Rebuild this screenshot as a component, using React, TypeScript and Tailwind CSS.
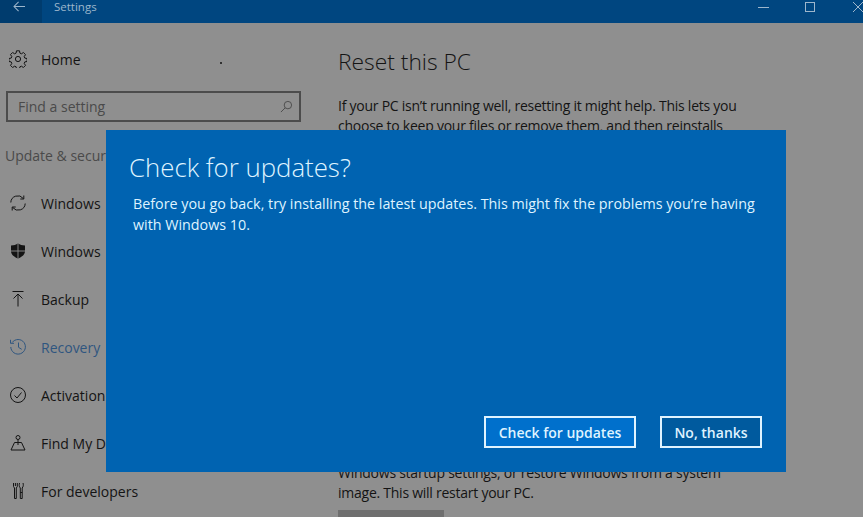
import type { ReactNode } from "react";

const ink = "#141414";

function Svg({ children, className = "" }: { children: ReactNode; className?: string }) {
  return (
    <svg viewBox="0 0 18 18" fill="none" stroke="currentColor" strokeWidth={1} className={`w-[18px] h-[18px] shrink-0 ${className}`}>
      {children}
    </svg>
  );
}

const GearIcon = () => (
  <Svg>
    <circle cx="9" cy="9" r="2.600" />
    <path d="M7.500.8h3l.4 2.300 1.500.7 2-1.300 2.100 2.100-1.300 2 .6 1.500 2.300.4v3l-2.300.4-.6 1.500 1.300 2-2.100 2.100-2-1.300-1.500.6-.4 2.300h-3l-.4-2.300-1.500-.6-2 1.300-2.100-2.100 1.300-2-.6-1.500-2.300-.4v-3l2.300-.4.6-1.500-1.300-2 2.100-2.100 2 1.300 1.500-.7z" />
  </Svg>
);

const SyncIcon = () => (
  <Svg>
    <path d="M1.800 8.500A7 7 0 0 1 14.300 4.500" />
    <path d="M14.800 1.500v3.500h-3.500" />
    <path d="M16.200 9.500A7 7 0 0 1 3.700 13.500" />
    <path d="M3.200 16.500V13h3.500" />
  </Svg>
);

const ShieldIcon = () => (
  <svg viewBox="0 0 18 18" className="w-[18px] h-[18px] shrink-0" fill="currentColor">
    <path d="M9 1.500c2 1.300 4 1.800 7 2V9c0 3.500-3 6-7 7.500C5 15 2 12.500 2 9V3.500c3-.2 5-.7 7-2z" />
    <path d="M9 1.500v15M2 9h14" stroke="#8f8f8f" strokeWidth="0.9" />
  </svg>
);

const BackupIcon = () => (
  <Svg>
    <path d="M3.500 1.500h11" />
    <path d="M9 16.500V4" />
    <path d="M4.500 8.500 9 4l4.500 4.500" />
  </Svg>
);

const HistoryIcon = () => (
  <Svg>
    <path d="M3.200 4.500A7.300 7.300 0 1 1 1.800 9" />
    <path d="M1.500 1.800v3.500H5" />
    <path d="M9.500 4.500v4.800l3.200 2" />
  </Svg>
);

const CheckIcon = () => (
  <Svg>
    <circle cx="9" cy="9" r="7.500" />
    <path d="M5.500 9.500l2.500 2.500 4.500-5.500" />
  </Svg>
);

const FindIcon = () => (
  <Svg>
    <circle cx="9" cy="3.500" r="2" />
    <path d="M9 5.500v5.500" />
    <path d="M5.500 8.500h7" />
    <path d="M5.500 8.500 2 16h14l-3.500-7.500" />
  </Svg>
);

const DevIcon = () => (
  <Svg>
    <path d="M4.500 1v3.500l1 1.500v10.500h1.800V6l1-1.500V1" />
    <path d="M6.400 1v3" />
    <path d="M10.500 1c-.5 1.500-.5 3.500.8 5v10.500h1.900V6c1.300-1.500 1.300-3.500.8-5" />
    <path d="M11.300 10.500h1.900" />
  </Svg>
);

// labels stop where the dialog covers them
const navItems: { label: string; icon: ReactNode; active?: boolean }[] = [
  { label: "Windows", icon: <SyncIcon /> },
  { label: "Windows", icon: <ShieldIcon /> },
  { label: "Backup", icon: <BackupIcon /> },
  { label: "Recovery", icon: <HistoryIcon />, active: true },
  { label: "Activation", icon: <CheckIcon /> },
  { label: "Find My D", icon: <FindIcon /> },
  { label: "For developers", icon: <DevIcon /> },
];

export default function App() {
  return (
    <div
      className="relative w-[863px] h-[517px] overflow-hidden bg-[#8f8f8f] text-[14px]"
      style={{ fontFamily: '"Open Sans", "Noto Sans", sans-serif', color: ink }}
    >
      {/* title bar */}
      <div className="flex items-start h-[23px] bg-[#004680] text-[#9db6cc]">
        <div className="flex items-center justify-center w-[42px] h-full pb-[10px] pr-1 bg-[#003c6e]">
          <svg viewBox="0 0 14 12" className="w-[13px] h-[11px]" fill="none" stroke="currentColor" strokeWidth="1.1">
            <path d="M13 6H1.500M6 1 1 6l5 5" />
          </svg>
        </div>
        <span className="ml-[12px] text-[11.500px] leading-[14px]">Settings</span>
        <div className="flex items-center ml-auto h-[14px]">
          <div className="w-[11px] h-px bg-current mr-[36px]" />
          <div className="w-[10px] h-[10px] border border-current mr-[37px]" />
          <svg viewBox="0 0 12 12" className="w-[12px] h-[12px] mr-[-1px]" fill="none" stroke="currentColor" strokeWidth="1">
            <path d="M1 1l10 10M11 1 1 11" />
          </svg>
        </div>
      </div>

      <div className="flex">
        {/* sidebar */}
        <aside className="w-[320px] shrink-0">
          <div className="flex items-center h-[48px] mt-[12px] pl-[9px] gap-[14px]">
            <GearIcon />
            <span>Home</span>
          </div>
          <div className="flex items-center justify-between h-[31px] ml-[6px] mr-[19px] mt-[8px] pl-[10px] pr-[6px] border-2 border-[#4c4c4c] text-[#4a4a4a]">
            <span>Find a setting</span>
            <svg viewBox="0 0 14 14" className="w-[13px] h-[13px]" fill="none" stroke="currentColor" strokeWidth="1">
              <circle cx="8.500" cy="5.500" r="4" />
              <path d="M5.500 8.500 1 13" />
            </svg>
          </div>
          <div className="mt-[23px] pl-[5px] leading-[21px] text-[#4a4a4a]">Update &amp; secur</div>
          <nav className="mt-[13px]">
            {navItems.map((item, i) => (
              <div
                key={i}
                className={`flex items-center h-[48px] pl-[9px] gap-[14px] ${item.active ? "text-[#2f5680]" : ""}`}
              >
                {item.icon}
                <span>{item.label}</span>
              </div>
            ))}
          </nav>
        </aside>

        {/* main content, mostly covered by the dialog */}
        <main className="pl-[18px] w-[440px]">
          <h1 className="mt-[21px] text-[22.800px] leading-[36px] font-light">Reset this PC</h1>
          <p className="mt-[16px] leading-[20px] tracking-[-0.25px]">
            If your PC isn&rsquo;t running well, resetting it might help. This lets you choose to keep your files or remove them, and then reinstalls
          </p>
          <p className="mt-[327px] leading-[20px] tracking-[-0.25px]">
            Windows startup settings, or restore Windows from a system image. This will restart your PC.
          </p>
          <div className="w-[106px] h-[32px] mt-[7px] bg-[#6f6f6f]" />
        </main>
      </div>

      {/* stray speck in the capture */}
      <div className="absolute left-[220px] top-[62px] w-[2px] h-[2px] rounded-full bg-[#111]" />

      {/* dialog */}
      <div className="absolute left-[106px] top-[130px] flex flex-col w-[680px] h-[342px] bg-[#0063b1] text-[#dff3ff]">
        <h2 className="mt-[19px] ml-[23px] text-[25.800px] leading-[36px] font-light">Check for updates?</h2>
        <p className="mt-[8px] ml-[27px] w-[640px] leading-[21px] text-[14.300px]">
          Before you go back, try installing the latest updates. This might fix the problems you&rsquo;re having with Windows 10.
        </p>
        <div className="flex justify-end gap-[24px] mt-auto mr-[24px] mb-[24px] font-semibold text-[14px]">
          <button className="w-[152px] h-[32px] border-2 border-[#dff3ff] bg-[#0070cc]">Check for updates</button>
          <button className="w-[102px] h-[32px] border-2 border-[#dff3ff] bg-[#005a9e]">No, thanks</button>
        </div>
      </div>
    </div>
  );
}
